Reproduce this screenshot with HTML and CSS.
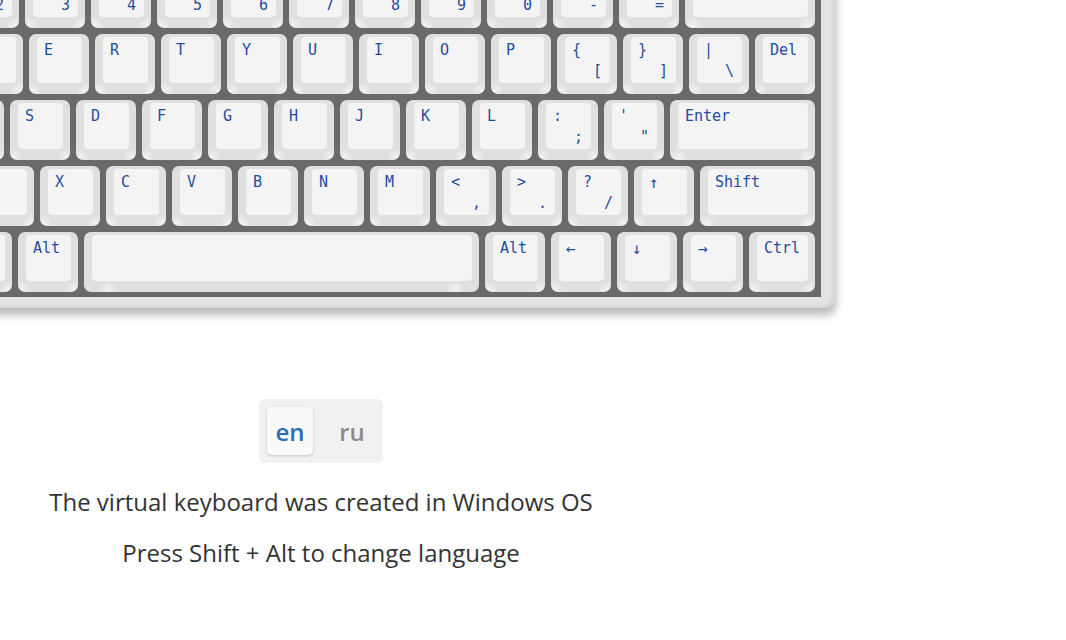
FILE: index.html
```html
<!DOCTYPE html>
<html lang="en">
<head>
<meta charset="utf-8">
<title>Virtual Keyboard</title>
<link rel="stylesheet" href="styles.css">
</head>
<body>
<main class="page">
  <div class="keyboard">
    <div class="board">
      <div class="row">
        <div class="key"><div class="cap"><span class="top">~</span><span class="bot">`</span></div></div>
        <div class="key"><div class="cap"><span class="top">!</span><span class="bot">1</span></div></div>
        <div class="key"><div class="cap"><span class="top">@</span><span class="bot">2</span></div></div>
        <div class="key"><div class="cap"><span class="top">#</span><span class="bot">3</span></div></div>
        <div class="key"><div class="cap"><span class="top">$</span><span class="bot">4</span></div></div>
        <div class="key"><div class="cap"><span class="top">%</span><span class="bot">5</span></div></div>
        <div class="key"><div class="cap"><span class="top">^</span><span class="bot">6</span></div></div>
        <div class="key"><div class="cap"><span class="top">&amp;</span><span class="bot">7</span></div></div>
        <div class="key"><div class="cap"><span class="top">*</span><span class="bot">8</span></div></div>
        <div class="key"><div class="cap"><span class="top">(</span><span class="bot">9</span></div></div>
        <div class="key"><div class="cap"><span class="top">)</span><span class="bot">0</span></div></div>
        <div class="key"><div class="cap"><span class="top">_</span><span class="bot">-</span></div></div>
        <div class="key"><div class="cap"><span class="top">+</span><span class="bot">=</span></div></div>
        <div class="key w130"><div class="cap"><span class="top">Backspace</span></div></div>
      </div>
      <div class="row">
        <div class="key w64"><div class="cap"><span class="top">Tab</span></div></div>
        <div class="key"><div class="cap"><span class="top">Q</span></div></div>
        <div class="key"><div class="cap"><span class="top">W</span></div></div>
        <div class="key"><div class="cap"><span class="top">E</span></div></div>
        <div class="key"><div class="cap"><span class="top">R</span></div></div>
        <div class="key"><div class="cap"><span class="top">T</span></div></div>
        <div class="key"><div class="cap"><span class="top">Y</span></div></div>
        <div class="key"><div class="cap"><span class="top">U</span></div></div>
        <div class="key"><div class="cap"><span class="top">I</span></div></div>
        <div class="key"><div class="cap"><span class="top">O</span></div></div>
        <div class="key"><div class="cap"><span class="top">P</span></div></div>
        <div class="key"><div class="cap"><span class="top">{</span><span class="bot">[</span></div></div>
        <div class="key"><div class="cap"><span class="top">}</span><span class="bot">]</span></div></div>
        <div class="key"><div class="cap"><span class="top">|</span><span class="bot">\</span></div></div>
        <div class="key"><div class="cap"><span class="top">Del</span></div></div>
      </div>
      <div class="row">
        <div class="key w111"><div class="cap"><span class="top">CapsLock</span></div></div>
        <div class="key"><div class="cap"><span class="top">A</span></div></div>
        <div class="key"><div class="cap"><span class="top">S</span></div></div>
        <div class="key"><div class="cap"><span class="top">D</span></div></div>
        <div class="key"><div class="cap"><span class="top">F</span></div></div>
        <div class="key"><div class="cap"><span class="top">G</span></div></div>
        <div class="key"><div class="cap"><span class="top">H</span></div></div>
        <div class="key"><div class="cap"><span class="top">J</span></div></div>
        <div class="key"><div class="cap"><span class="top">K</span></div></div>
        <div class="key"><div class="cap"><span class="top">L</span></div></div>
        <div class="key"><div class="cap"><span class="top">:</span><span class="bot">;</span></div></div>
        <div class="key"><div class="cap"><span class="top">'</span><span class="bot">"</span></div></div>
        <div class="key w145"><div class="cap"><span class="top">Enter</span></div></div>
      </div>
      <div class="row">
        <div class="key w141"><div class="cap"><span class="top">Shift</span></div></div>
        <div class="key"><div class="cap"><span class="top">Z</span></div></div>
        <div class="key"><div class="cap"><span class="top">X</span></div></div>
        <div class="key"><div class="cap"><span class="top">C</span></div></div>
        <div class="key"><div class="cap"><span class="top">V</span></div></div>
        <div class="key"><div class="cap"><span class="top">B</span></div></div>
        <div class="key"><div class="cap"><span class="top">N</span></div></div>
        <div class="key"><div class="cap"><span class="top">M</span></div></div>
        <div class="key"><div class="cap"><span class="top">&lt;</span><span class="bot">,</span></div></div>
        <div class="key"><div class="cap"><span class="top">&gt;</span><span class="bot">.</span></div></div>
        <div class="key"><div class="cap"><span class="top">?</span><span class="bot">/</span></div></div>
        <div class="key"><div class="cap"><span class="top arrow">↑</span></div></div>
        <div class="key w115"><div class="cap"><span class="top">Shift</span></div></div>
      </div>
      <div class="row">
        <div class="key w113"><div class="cap"><span class="top">Ctrl</span></div></div>
        <div class="key w66"><div class="cap"><span class="top">Win</span></div></div>
        <div class="key"><div class="cap"><span class="top">Alt</span></div></div>
        <div class="key w395"><div class="cap"></div></div>
        <div class="key"><div class="cap"><span class="top">Alt</span></div></div>
        <div class="key"><div class="cap"><span class="top arrow">←</span></div></div>
        <div class="key"><div class="cap"><span class="top arrow">↓</span></div></div>
        <div class="key"><div class="cap"><span class="top arrow">→</span></div></div>
        <div class="key w66"><div class="cap"><span class="top">Ctrl</span></div></div>
      </div>
    </div>
  </div>

  <div class="lang">
    <button class="lang-btn active">en</button>
    <button class="lang-btn">ru</button>
  </div>

  <p class="note">The virtual keyboard was created in Windows OS</p>
  <p class="note second">Press Shift + Alt to change language</p>
</main>
</body>
</html>
```

FILE: styles.css
```css
html, body {
  margin: 0;
  padding: 0;
  background: #ffffff;
}

body {
  font-family: "Open Sans", "Liberation Sans", sans-serif;
  overflow: hidden;
}

.page {
  width: 642px;
  display: flex;
  flex-direction: column;
  align-items: center;
  margin-top: -49px;
}

.keyboard {
  flex: none;
  background: #e4e4e4;
  padding: 11px 14px 11px 14px;
  border-radius: 9px;
  box-shadow: inset -3px -3px 3px rgba(0, 0, 0, 0.06), 1px 7px 9px rgba(0, 0, 0, 0.28);
}

.board {
  background: #6a6a6a;
  padding: 6px 6px 5px 6px;
  display: flex;
  flex-direction: column;
  gap: 6px;
}

.row {
  display: flex;
  gap: 6px;
}

.key {
  flex: none;
  box-sizing: border-box;
  width: 60px;
  height: 60px;
  padding: 3px 7px 11px 8px;
  border-radius: 7px;
  background:
    radial-gradient(circle at 6% 96%, #f2f2f2 0, rgba(242,242,242,0) 9px),
    radial-gradient(circle at 94% 96%, #f2f2f2 0, rgba(242,242,242,0) 9px),
    #e0e0e0;
}

.w64 { width: 64px; }
.w66 { width: 66px; }
.w111 { width: 111px; }
.w113 { width: 113px; }
.w115 { width: 115px; }
.w130 { width: 130px; }
.w141 { width: 141px; }
.w145 { width: 145px; }
.w395 { width: 395px; }

.cap {
  box-sizing: border-box;
  height: 100%;
  border-radius: 4px;
  background: #f4f4f4;
  padding: 6px 8px 4px 7px;
  display: flex;
  flex-direction: column;
  justify-content: space-between;
  font-family: "DejaVu Sans Mono", "Liberation Mono", monospace;
  font-size: 15px;
  line-height: 15px;
  color: #1f4da0;
}

.top {
  align-self: flex-start;
  white-space: nowrap;
}

.bot {
  align-self: flex-end;
}

.arrow {
  font-size: 16px;
  margin-left: 0;
}

.lang {
  margin-top: 91px;
  display: flex;
  gap: 16px;
  padding: 8px;
  background: #f1f1f1;
  border-radius: 6px;
}

.lang-btn {
  width: 46px;
  height: 48px;
  padding: 0;
  border: none;
  border-radius: 5px;
  background: transparent;
  font-family: "Open Sans", "Liberation Sans", sans-serif;
  font-size: 24px;
  font-weight: 600;
  color: #8c8c8c;
}

.lang-btn.active {
  background: #fafafa;
  color: #2a6db3;
  box-shadow: 0 1px 3px rgba(0, 0, 0, 0.18);
}

.note {
  margin: 23px 0 0;
  font-size: 24px;
  line-height: 32px;
  color: #333333;
  text-align: center;
}

.note.second {
  margin-top: 19px;
}
```
